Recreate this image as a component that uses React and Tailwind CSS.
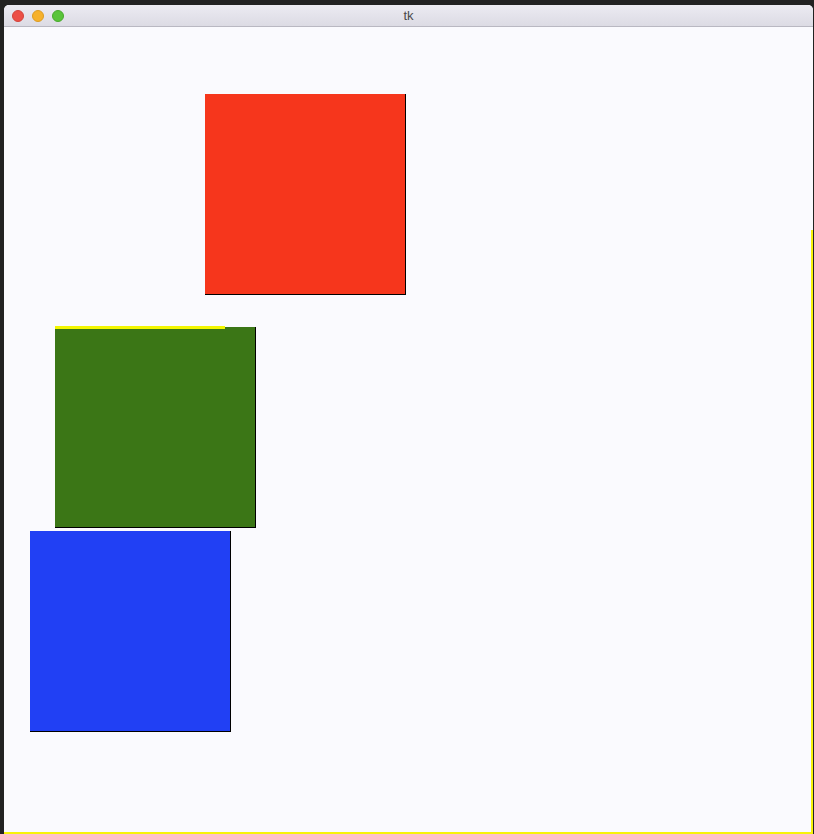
import React from "react";

const squares = [
  { left: "left-[201px]", top: "top-[67px]", bg: "bg-[#f6361c]" },
  { left: "left-[51px]", top: "top-[300px]", bg: "bg-[#3b7616]" },
  { left: "left-[26px]", top: "top-[504px]", bg: "bg-[#2140f4]" },
];

export default function App() {
  return (
    <div className="w-[814px] h-[834px] bg-[#222] pt-[5px] pl-[4px] overflow-hidden font-['Liberation_Sans',sans-serif]">
      <div className="w-[809px] h-[829px] flex flex-col rounded-t-[5px] overflow-hidden bg-[#fafafe]">
        {/* title bar */}
        <div className="relative h-[22px] flex items-center bg-gradient-to-b from-[#ecebf2] to-[#dcdbe4] border-b border-[#b9b8c2]">
          <div className="flex items-center gap-[8px] pl-[8px]">
            <span className="w-[12px] h-[12px] rounded-full bg-[#ec4f46] border border-[#d2433b]" />
            <span className="w-[12px] h-[12px] rounded-full bg-[#f6b12c] border border-[#dc9b22]" />
            <span className="w-[12px] h-[12px] rounded-full bg-[#5ac43a] border border-[#48a92c]" />
          </div>
          <div className="absolute inset-0 flex items-center justify-center text-[13px] text-[#4a4a4a]">tk</div>
        </div>
        {/* canvas */}
        <div className="relative flex-1 border-b-[2px] border-[#f7f20a]">
          {squares.map((s, i) => (
            <div
              key={i}
              className={`absolute ${s.left} ${s.top} w-[201px] h-[201px] ${s.bg} border-r border-b border-black`}
            />
          ))}
          <div className="absolute left-[51px] top-[299px] w-[170px] h-[3px] bg-[#f3f600]" />
          <div className="absolute right-0 top-[203px] bottom-0 w-[2px] bg-[#f7f20a]" />
        </div>
      </div>
    </div>
  );
}
